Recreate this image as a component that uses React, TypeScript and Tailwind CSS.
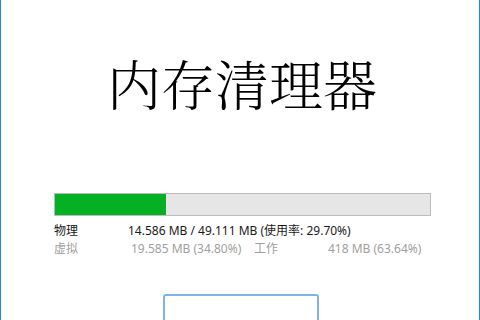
export default function App() {
  const used = 29.7;
  return (
    <div className="h-[320px] w-[480px] overflow-hidden border-x border-[#2b88d8] bg-white">
      <div
        className="pt-[56px] text-center text-[54px] leading-none text-black"
        style={{ fontFamily: '"Noto Serif CJK SC", "Noto Sans CJK SC", serif' }}
      >
        <span className="pl-[4px] font-light">内存清理器</span>
      </div>

      <div className="ml-[53px] mt-[83px] h-[23px] w-[377px] border border-[#bcbcbc] bg-[#e6e6e6]">
        <div className="h-full bg-[#06b025]" style={{ width: `${used}%` }} />
      </div>

      <div
        className="ml-[53px] mt-[6px] text-[12px] leading-[18px]"
        style={{ fontFamily: '"Noto Sans", "Noto Sans CJK SC", sans-serif' }}
      >
        <div className="flex text-[#1a1a1a]">
          <span className="w-[74px]">物理</span>
          <span>14.586 MB / 49.111 MB (使用率: 29.70%)</span>
        </div>
        <div className="flex text-[#a0a0a0]">
          <span className="w-[77px]">虚拟</span>
          <span className="w-[123px]">19.585 MB (34.80%)</span>
          <span className="w-[74px]">工作</span>
          <span>418 MB (63.64%)</span>
        </div>
      </div>

      <div className="mt-[36px] flex justify-center">
        <button
          type="button"
          className="ml-[1px] h-[40px] w-[156px] rounded-[3px] border-2 border-[#7eb2ec] bg-white"
        />
      </div>
    </div>
  );
}
